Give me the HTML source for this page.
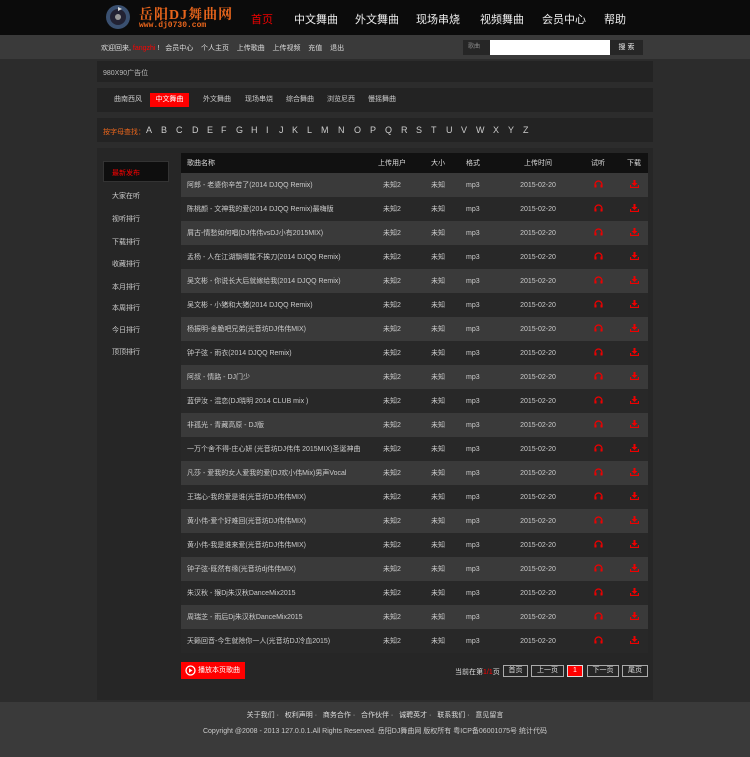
<!DOCTYPE html>
<html><head><meta charset="utf-8">
<style>
*{margin:0;padding:0;box-sizing:border-box}
body{width:750px;height:757px;overflow:hidden;background:#2c2c2c;font-family:"Liberation Sans","Noto Sans CJK SC",sans-serif;font-size:7px;color:#ddd;position:relative}
.abs{position:absolute}
#hd{left:0;top:0;width:750px;height:35px;background:#0b0b0b}
#hd .nav span{position:absolute;top:11px;font-size:11px;color:#eee}
#sub{left:0;top:35px;width:750px;height:24px;background:#3a3a3a}
.box{background:#232323}
.tab{position:absolute;top:93px;height:14px;line-height:14px;font-size:7px;color:#ccc}
.letters span{position:absolute;top:125px;font-size:9px;color:#ccc}
#main{left:97px;top:148px;width:556px;height:552px;background:#262626}
.side{position:absolute;left:112px;font-size:7px;color:#ccc}
table{position:absolute;left:181px;width:467px;border-collapse:collapse;table-layout:fixed}
td,th{height:24px;font-size:7px;color:#ccc;font-weight:normal;padding:0;white-space:nowrap;overflow:hidden}
th{height:20px;background:#111;color:#ddd}
tr.o td{background:#3a3a3a}
tr.e td{background:#282828}
.c{text-align:center}
.f{padding-left:13px}
#ft{left:0;top:702px;width:750px;height:55px;background:#3a3a3a}
.pg{position:absolute;top:665px;height:12px;border:1px solid #aaa;font-size:7px;line-height:10px;text-align:center;color:#ddd}
</style></head><body>
<div id="hd" class="abs">
 <svg class="abs" style="left:104px;top:3px" width="28" height="28"><circle cx="14" cy="14" r="12" fill="#3a5070"/><circle cx="14" cy="14" r="8" fill="#223"/><circle cx="14" cy="14" r="3" fill="#999"/><path d="M14 4 L18 6 L14 8 Z" fill="#ddd"/></svg>
 <div class="abs" style="left:139px;top:4px;font-size:14px;color:#e8651c;font-family:'Liberation Serif','Noto Serif CJK SC',serif;font-weight:bold;letter-spacing:1px">岳阳DJ舞曲网</div>
 <div class="abs" style="left:139px;top:21px;font-size:8px;color:#e8651c;font-family:'Liberation Mono',monospace;font-weight:bold">www.dj0730.com</div>
 <div class="nav">
  <span style="left:251px;color:#e00">首页</span><span style="left:294px">中文舞曲</span><span style="left:355px">外文舞曲</span><span style="left:416px">现场串烧</span><span style="left:480px">视频舞曲</span><span style="left:542px">会员中心</span><span style="left:604px">帮助</span>
 </div>
</div>
<div id="sub" class="abs">
 <div class="abs" style="left:101px;top:8px;font-size:7px;color:#ddd">欢迎回来, <span style="color:#f00">fangzhi</span> !&nbsp;&nbsp; 会员中心 &nbsp;&nbsp; 个人主页 &nbsp;&nbsp; 上传歌曲 &nbsp;&nbsp; 上传视频 &nbsp;&nbsp; 充值 &nbsp;&nbsp; 退出</div>
 <div class="abs" style="left:463px;top:5px;width:27px;height:15px;background:#262626;color:#888;font-size:6px;line-height:15px;padding-left:5px">歌曲</div>
 <div class="abs" style="left:490px;top:5px;width:120px;height:15px;background:#fff"></div>
 <div class="abs" style="left:610px;top:5px;width:33px;height:15px;background:#262626;color:#eee;font-size:7px;line-height:15px;text-align:center">搜 索</div>
</div>
<div class="abs box" style="left:97px;top:61px;width:556px;height:21px"><div style="position:absolute;left:6px;top:7px;color:#bbb">980X90广告位</div></div>
<div class="abs box" style="left:97px;top:88px;width:556px;height:24px"></div>
<div class="tab" style="left:114px">曲南西风</div>
<div class="tab" style="left:150px;width:39px;background:#f00;color:#fff;text-align:center">中文舞曲</div>
<div class="tab" style="left:203px">外文舞曲</div>
<div class="tab" style="left:245px">现场串烧</div>
<div class="tab" style="left:286px">综合舞曲</div>
<div class="tab" style="left:327px">浏览尼西</div>
<div class="tab" style="left:368px">慢摇舞曲</div>
<div class="abs box" style="left:97px;top:118px;width:556px;height:24px"></div>
<div class="letters">
<span style="left:103px;color:#e8651c;font-size:7px;top:127px">按字母查找：</span>
<span style="left:146px">A</span><span style="left:161px">B</span><span style="left:176px">C</span><span style="left:192px">D</span><span style="left:207px">E</span><span style="left:221px">F</span><span style="left:236px">G</span><span style="left:251px">H</span><span style="left:266px">I</span><span style="left:279px">J</span><span style="left:292px">K</span><span style="left:307px">L</span><span style="left:321px">M</span><span style="left:338px">N</span><span style="left:354px">O</span><span style="left:370px">P</span><span style="left:385px">Q</span><span style="left:401px">R</span><span style="left:416px">S</span><span style="left:431px">T</span><span style="left:446px">U</span><span style="left:461px">V</span><span style="left:476px">W</span><span style="left:493px">X</span><span style="left:508px">Y</span><span style="left:523px">Z</span>
</div>
<div id="main" class="abs"></div>
<div class="abs" style="left:103px;top:161px;width:66px;height:21px;background:#0e0e0e;border:1px solid #333"></div>
<div class="side" style="top:168px;color:#f00">最新发布</div>
<div class="side" style="top:191px">大家在听</div>
<div class="side" style="top:214px">视听排行</div>
<div class="side" style="top:237px">下载排行</div>
<div class="side" style="top:259px">收藏排行</div>
<div class="side" style="top:282px">本月排行</div>
<div class="side" style="top:303px">本周排行</div>
<div class="side" style="top:325px">今日排行</div>
<div class="side" style="top:347px">顶顶排行</div>
<div id="rows"></div>
<script>
var cg='<colgroup><col style="width:180px"><col style="width:62px"><col style="width:30px"><col style="width:47px"><col style="width:76px"><col style="width:44px"><col style="width:28px"></colgroup>';
var s=["阿郎 - 老婆你辛苦了(2014 DJQQ Remix)","陈桃颜 - 文神我的爱(2014 DJQQ Remix)最嗨版","屑古-情愁如何唱(DJ伟伟vsDJ小有2015MIX)","孟杨 - 人在江湖飘哪能不挨刀(2014 DJQQ Remix)","吴文彬 - 你说长大后就嫁给我(2014 DJQQ Remix)","吴文彬 - 小猪和大猪(2014 DJQQ Remix)","杨振明-舍脆吧兄弟(光音坊DJ伟伟MIX)","钟子弦 - 雨衣(2014 DJQQ Remix)","阿叔 - 情路 - DJ门少","蓝伊汝 - 混恋(DJ晓明 2014 CLUB mix )","非孤光 - 青藏高原 - DJ版","一万个舍不得-庄心妍 (光音坊DJ伟伟 2015MIX)圣诞神曲","凡莎 - 爱我的女人爱我的爱(DJ欢小伟Mix)男声Vocal","王瑞心-我的爱是谁(光音坊DJ伟伟MIX)","黄小伟-爱个好难回(光音坊DJ伟伟MIX)","黄小伟-我是谁来爱(光音坊DJ伟伟MIX)","钟子弦-既然有缘(光音坊dj伟伟MIX)","朱汉秋 - 猴Dj朱汉秋DanceMix2015","周瑞芝 - 雨后Dj朱汉秋DanceMix2015","天籁回音-今生就除你一人(光音坊DJ冷血2015)"];
var h='<table style="top:153px">'+cg+'<tr><th style="text-align:left;padding-left:6px">歌曲名称</th><th class="c">上传用户</th><th class="c">大小</th><th class="f" style="text-align:left">格式</th><th class="c">上传时间</th><th class="c">试听</th><th class="c">下载</th></tr></table>';
h+='<table style="top:173px">'+cg;
var hp='<svg width="9" height="8" viewBox="0 0 9 8"><path d="M1 7V4.5a3.5 3.5 0 0 1 7 0V7" fill="none" stroke="#e00" stroke-width="1.2"/><rect x="0.5" y="4.5" width="2" height="3" fill="#e00"/><rect x="6.5" y="4.5" width="2" height="3" fill="#e00"/></svg>';
var dl='<svg width="9" height="8" viewBox="0 0 9 8"><path d="M3.5 0h2v3h2L4.5 6 1.5 3h2z" fill="#e00"/><path d="M0.5 5v2.5h8V5" fill="none" stroke="#e00" stroke-width="1.2"/></svg>';
for(var i=0;i<20;i++){h+='<tr class="'+(i%2?'e':'o')+'"><td style="padding-left:6px">'+s[i]+'</td><td class="c">未知2</td><td class="c">未知</td><td class="f">mp3</td><td class="c">2015-02-20</td><td class="c">'+hp+'</td><td class="c">'+dl+'</td></tr>';}
h+='</table>';document.getElementById('rows').innerHTML=h;
</script>
<div class="abs" style="left:181px;top:662px;width:64px;height:17px;background:#f00;color:#fff;font-size:7px;line-height:17px;padding-left:17px">播放本页歌曲</div>
<svg class="abs" style="left:185px;top:665px" width="11" height="11"><circle cx="5.5" cy="5.5" r="4.5" fill="none" stroke="#fff" stroke-width="1.3"/><path d="M4 3.3v4.4L7.5 5.5z" fill="#fff"/></svg>
<div class="abs" style="left:455px;top:667px;font-size:7px;color:#ddd">当前在第<span style="color:#f00">1/1</span>页</div>
<div class="pg" style="left:503px;width:25px">首页</div>
<div class="pg" style="left:531px;width:33px">上一页</div>
<div class="pg" style="left:567px;width:16px;background:#f00;border-color:#ddd;color:#fff">1</div>
<div class="pg" style="left:587px;width:32px">下一页</div>
<div class="pg" style="left:622px;width:26px">尾页</div>
<div id="ft" class="abs">
 <div class="abs" style="left:0;width:750px;top:8px;text-align:center;color:#ddd;font-size:7px">关于我们 · &nbsp; 权利声明 · &nbsp; 商务合作 · &nbsp; 合作伙伴 · &nbsp; 诚聘英才 · &nbsp; 联系我们 · &nbsp; 意见留言</div>
 <div class="abs" style="left:0;width:750px;top:24px;text-align:center;color:#ccc;font-size:7px">Copyright @2008 - 2013 127.0.0.1.All Rights Reserved. 岳阳DJ舞曲网 版权所有 粤ICP备06001075号 统计代码</div>
</div>
</body></html>
